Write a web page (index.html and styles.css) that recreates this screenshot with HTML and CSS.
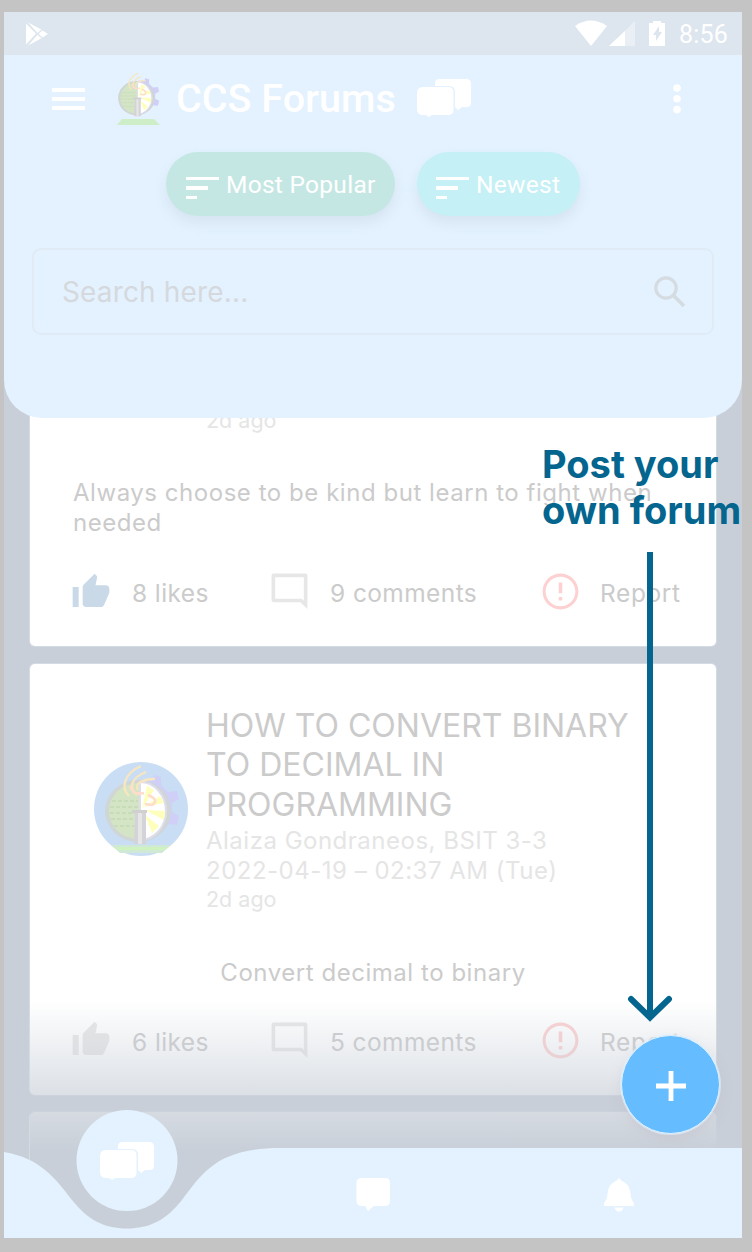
FILE: index.html
```html
<!DOCTYPE html>
<html lang="en">
<head>
<meta charset="utf-8">
<title>CCS Forums</title>
<link rel="stylesheet" href="styles.css">
</head>
<body>
<svg class="defs" width="0" height="0">
  <symbol id="thumb" viewBox="0 0 24 24"><path d="M1 21h3.600V9H1v12zm22-11c0-1.100-.9-2-2-2h-6.310l.95-4.570.03-.32c0-.41-.17-.79-.44-1.060L14.170 1 7.590 7.590C7.220 7.950 7 8.450 7 9v10c0 1.100.9 2 2 2h9c.83 0 1.540-.5 1.840-1.220l3.020-7.050c.09-.23.14-.47.14-.73v-2z"/></symbol>
  <symbol id="comment" viewBox="0 0 24 24"><path d="M22 3.200c0-.7-.5-1.200-1.200-1.200H3.200C2.500 2 2 2.500 2 3.200v13.600c0 .7.500 1.200 1.200 1.200H18l4 3.700zM20 4v13.170L18.830 16H4V4h16z"/></symbol>
  <symbol id="alert" viewBox="0 0 24 24"><path d="M11 15h2v2h-2zm0-8h2v6h-2zm.99-5C6.470 2 2 6.480 2 12s4.470 10 9.990 10C17.520 22 22 17.520 22 12S17.520 2 11.990 2zM12 20.300c-4.600 0-8.300-3.700-8.300-8.300s3.700-8.300 8.300-8.300 8.300 3.700 8.300 8.300-3.700 8.300-8.300 8.300z"/></symbol>
  <symbol id="sort" viewBox="0 0 34 24"><path d="M1 1h33v3H1zM1 10h22v4H1zM1 20h11v3H1z"/></symbol>
  <symbol id="chats" viewBox="0 0 54 38"><path d="M23 0h26q5 0 5 5v19q0 4-4 4h-5l-4 3-3-3V13q0-6-6-6H18V4q0-4 5-4z"/><path d="M6 8h25q5.500 0 5.500 5v18q0 5-5.500 5H15l-3 2-3-2H6q-6 0-6-6V14q0-6 6-6z"/></symbol>
  <symbol id="crest" viewBox="0 0 94 94">
    <path d="M48 17l10 2 2-6 7 2v8l7 7 9-1 2 8-7 4v9l7 4-2 9-8-1-8 9-9 6-11 4z" fill="#cfcff8"/>
    <ellipse cx="44" cy="49" rx="33" ry="31" fill="#d0d6d6"/>
    <ellipse cx="44" cy="49" rx="29" ry="28" fill="#d4e5c6"/>
    <path d="M18 39h26M16 45h28M16 51h28M17 57h26M20 64h22" stroke="#c5d9b6" stroke-width="1.300" stroke-dasharray="4 2"/>
    <path d="M46 20a26 29 0 0 1 0 58z" fill="#fff" stroke="#ddddec" stroke-width="2"/>
    <path d="M48 47L53 24l7 4zM50 45l16-11 4 7zM51 48l20 1-1 9zM51 53l14 11-7 7z" fill="#ffffbd"/>
    <path d="M47 4C31 11 26 25 35 34M52 10C36 16 35 27 43 33M61 17C48 17 40 22 44 28" fill="none" stroke="#f8e6c0" stroke-width="2.400"/>
    <path d="M36 24q3 10 14 7M54 33q12 5 4 10l-7-1" fill="none" stroke="#ffdccb" stroke-width="2.600"/>
    <path d="M41 50h11v32H40z" fill="#d4d4d8"/><path d="M44 50h4v32h-4z" fill="#e6e6e6"/><path d="M38 48h15v3H38z" fill="#d0d0d0"/>
  </symbol>
</svg>
<main class="phone">
  <header class="top">
    <div class="status">
      <svg class="play" viewBox="0 0 24 24"><path d="M1 1.500l10 10.300L1 22.500z M3 .5l13.500 7-4 3.500zM17.500 8.500L23 12l-5.500 3.500-4-3.700zM3 23.500l9.500-10.700 4 3.500z" fill="#fff"/></svg>
      <svg class="signals" viewBox="0 0 92 28"><g fill="#fff"><path d="M0 6q16-11 32 0L16 26z"/><path d="M34 26L60 1v25z" opacity=".35"/><path d="M34 26l16-15v15z"/><path d="M74 3h4V1h8v2h4v23H74z"/></g><path d="M84 6l-6 9h3v6l6-9h-3z" fill="#dde6ee"/></svg>
      <span class="clock">8:56</span>
    </div>
    <div class="bar">
      <svg class="menu" viewBox="0 0 33 22"><path d="M0 0h33v4H0zM0 9h33v4H0zM0 18h33v4H0z" fill="#fff"/></svg>
      <svg class="mark" viewBox="0 0 44 52"><use href="#crest" x="-5" y="-2" width="52" height="52"/><path d="M5 46h32l6 6H0z" fill="#ceeec8"/></svg>
      <h1>CCS Forums</h1>
      <svg class="chats" viewBox="0 0 54 38"><use href="#chats"/></svg>
      <svg class="more" viewBox="0 0 8 30"><g fill="#fff"><circle cx="4" cy="4" r="3.800"/><circle cx="4" cy="14.800" r="3.800"/><circle cx="4" cy="25.600" r="3.800"/></g></svg>
    </div>
    <div class="chips">
      <div class="chip popular"><svg><use href="#sort"/></svg><span>Most Popular</span></div>
      <div class="chip newest"><svg><use href="#sort"/></svg><span>Newest</span></div>
    </div>
    <div class="search"><span>Search here...</span>
      <svg viewBox="0 0 32 32"><circle cx="12" cy="12" r="10.200" fill="none" stroke="#d5dce1" stroke-width="3.200"/><path d="M19 19l11 11" stroke="#d5dce1" stroke-width="3.800"/></svg>
    </div>
  </header>

  <section class="feed">
    <article class="card first">
      <p class="ago">2d ago</p>
      <p class="text">Always choose to be kind but learn to fight when<br>needed</p>
      <div class="actions">
        <span class="act liked"><svg class="thumb"><use href="#thumb"/></svg><b>8 likes</b></span>
        <span class="act"><svg><use href="#comment"/></svg><b>9 comments</b></span>
        <span class="act alert"><svg><use href="#alert"/></svg><b class="report">Report</b></span>
      </div>
    </article>
    <article class="card second">
      <div class="head">
        <svg class="avatar" viewBox="0 0 94 94"><circle cx="47" cy="47" r="47" fill="#c9def4"/><use href="#crest"/><path d="M17 83h60l-9 8H26z" fill="#cfe9d6"/><path d="M20 85h54l-3 3H24z" fill="#cff3c0"/></svg>
        <div>
          <h2>HOW TO CONVERT BINARY<br>TO DECIMAL IN<br>PROGRAMMING</h2>
          <p class="by">Alaiza Gondraneos, BSIT 3-3</p>
          <p class="by">2022-04-19 – 02:37 AM (Tue)</p>
          <p class="ago">2d ago</p>
        </div>
      </div>
      <p class="text center">Convert decimal to binary</p>
      <div class="actions">
        <span class="act"><svg class="thumb"><use href="#thumb"/></svg><b>6 likes</b></span>
        <span class="act"><svg><use href="#comment"/></svg><b>5 comments</b></span>
        <span class="act alert"><svg><use href="#alert"/></svg><b class="report">Report</b></span>
      </div>
    </article>
    <article class="card third"></article>
  </section>

  <div class="fade"></div>
  <nav class="tabs">
    <svg viewBox="4 1108 738 130">
      <path d="M4 1152C40 1158 55 1178 72 1200C88 1220 104 1228.500 127 1228.500C150 1228.500 166 1220 182 1200C203 1172 218 1148 280 1148H742V1238H4z" fill="#e3f2fe"/>
      <circle cx="127" cy="1160.500" r="50.500" fill="#e3f2fe"/>
      <g fill="#fff"><use href="#chats" x="100" y="1142" width="54" height="38"/>
      <path d="M362 1178h23q5 0 5 5v18q0 5-5 5h-11l-6 5-3-5h-3q-5.500 0-5.500-5v-18q0-5 5.500-5z"/>
      <path d="M619 1178l3 3q8 3 8.500 13 .5 6 3.500 9v3h-30v-3q3-3 3.500-9 .5-10 8.500-13zM614.500 1207.500h9q-1 4-4.500 4t-4.500-4z"/></g>
    </svg>
  </nav>
  <button class="fab" aria-label="New post"><svg viewBox="0 0 30 30"><path d="M0 15h30M15 0v30" stroke="#fff" stroke-width="4.800"/></svg></button>
  <div class="callout">
    <p>Post your<br>own forum</p>
    <svg viewBox="0 0 46 472"><path d="M23 0v466" stroke-width="6"/><path d="M4 447l19 18.500L42 447" stroke-width="6" stroke-linecap="round"/></svg>
  </div>
</main>
</body>
</html>
```
FILE: styles.css
```css
* { box-sizing: border-box; margin: 0; padding: 0; }
body { background: #c4c4c4; font-family: Inter, "Liberation Sans", sans-serif; padding: 12px 10px 14px 4px; }
.defs { position: absolute; }
svg { display: block; flex: none; }
.phone { position: relative; width: 738px; height: 1226px; overflow: hidden; background: #c8cfd9; display: flex; flex-direction: column; }

.top { position: relative; z-index: 1; flex: none; height: 405.500px; background: #e3f2fe; border-radius: 0 0 38px 38px; color: #fff; }
.status { height: 43px; background: #dde6ee; display: flex; align-items: center; padding: 0 14px 0 21px; }
.play { width: 24px; height: 24px; }
.signals { width: 92px; height: 28px; margin-left: auto; }
.clock { font: 25px/30px Roboto, sans-serif; letter-spacing: .2px; margin: 3px 0 0 12px; }
.bar { height: 97px; display: flex; align-items: center; padding: 0 61px 10px 48px; }
.menu { width: 33px; height: 22px; }
.mark { width: 44px; height: 52px; margin-left: 32px; }
h1 { font: 500 39.500px/48px Roboto, sans-serif; margin-left: 15px; white-space: nowrap; }
.bar .chats { width: 54px; height: 38px; fill: #fff; margin: -2px 0 0 21px; }
.more { width: 8px; height: 30px; margin-left: auto; }
.chips { display: flex; gap: 22px; padding-left: 162px; }
.chip { height: 64px; border-radius: 32px; display: flex; align-items: center; padding: 1px 0 0 19px; font: 24.500px/30px Roboto, sans-serif; letter-spacing: .28px; white-space: nowrap; box-shadow: 0 7px 12px rgba(190, 195, 215, .3); }
.chip svg { width: 34px; height: 24px; fill: #fff; margin: 6px 7px 0 0; }
.popular { width: 229px; background: #c5e7e3; }
.newest { width: 163px; background: #c5f0f5; padding-left: 18px; }
.search { margin: 32px 28px 0; height: 87px; border: 2px solid #e0ebf5; border-radius: 9px; display: flex; align-items: center; justify-content: space-between; padding: 0 26px 0 28px; font-size: 28px; letter-spacing: .15px; color: #d5d9dd; }
.search svg { width: 32px; height: 32px; }

.feed { margin-top: -40px; display: flex; flex-direction: column; gap: 18px; padding: 0 26px; }
.card { flex: none; background: #fff; border-radius: 5px; box-shadow: 0 0 0 1px rgba(225, 232, 239, .45); color: #cbcbcb; }
.first { height: 268px; padding: 29px 32px 0 43px; }
.first .ago { margin-left: 133px; }
.text { font-size: 24px; line-height: 30px; letter-spacing: .54px; white-space: nowrap; }
.first .text { margin-top: 44px; }
.second { height: 431px; padding: 42px 32px 0 43px; }
.third { height: 160px; margin-top: -1px; }
.head { display: flex; padding-left: 21px; gap: 18px; white-space: nowrap; }
.avatar { width: 94px; height: 94px; margin-top: 56px; }
h2 { font-size: 32px; font-weight: 400; line-height: 39.500px; margin-bottom: 2px; }
.by { font-size: 24px; line-height: 30px; letter-spacing: .5px; color: #e5e5e5; }
.ago { font-size: 21.500px; line-height: 27px; color: #e5e5e5; }
.center { text-align: center; margin: 45px 11px 0 0; }
.actions { display: grid; grid-template-columns: 195px 274px 1fr; margin-top: 31px; height: 46px; align-items: center; }
.second .actions { margin-top: 29px; }
.act { display: flex; align-items: center; height: 46px; white-space: nowrap; }
.act b { font-weight: 400; font-size: 24.500px; line-height: 30px; letter-spacing: .4px; margin-top: 3px; }
.act .report { letter-spacing: .6px; }
.act svg { width: 43px; height: 43px; fill: #e7e7e7; margin-right: 19px; }
.act svg.thumb { width: 40px; height: 40px; margin: 0 21px 0 -2px; }
.act.liked svg { fill: #c9d9e7; }
.act.alert svg { fill: #fdd1d1; margin-left: -3px; margin-right: 18px; }

.fade { position: absolute; left: 26px; right: 0; top: 988px; bottom: 0; background: linear-gradient(rgba(200, 207, 216, 0), #c8cfd8 150px, #c8cfd9); }
.tabs { position: absolute; left: 0; bottom: 0; width: 738px; height: 130px; }
.fab { position: absolute; left: 617px; top: 1023px; width: 99px; height: 99px; border: 1px solid #e3f2fe; border-radius: 50%; background: #65bdff; display: grid; place-items: center; box-shadow: 0 0 0 1px rgba(227, 242, 254, .6), 0 5px 12px rgba(190, 180, 195, .35); }
.fab svg { width: 30px; height: 30px; margin-top: 3px; }
.callout { position: absolute; left: 538px; top: 429px; z-index: 2; color: #04658f; }
.callout p { font-size: 38px; font-weight: 700; line-height: 46px; white-space: nowrap; }
.callout svg { width: 46px; height: 472px; margin: 19px 0 0 85px; stroke: #04658f; fill: none; }
```
